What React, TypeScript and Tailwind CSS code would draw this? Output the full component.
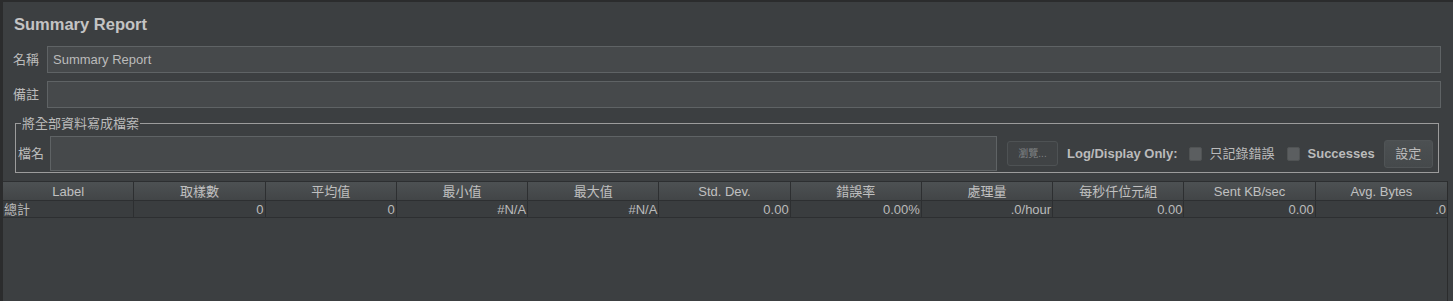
import React from "react";

const font = "font-['Liberation_Sans','Noto_Sans_CJK_TC',sans-serif]";

const columns = ["Label", "取樣數", "平均值", "最小值", "最大值", "Std. Dev.", "錯誤率", "處理量", "每秒仟位元組", "Sent KB/sec", "Avg. Bytes"];
const totals = ["總計", "0", "0", "#N/A", "#N/A", "0.00", "0.00%", ".0/hour", "0.00", "0.00", ".0"];

const Field = ({ label, value }: { label: string; value?: string }) => (
    <div className="flex items-center">
        <div className="w-[34px] text-[13px] text-[#bbbbbb]">{label}</div>
        <div className="flex h-[27px] flex-1 items-center border border-[#5f6365] bg-[#46494b] px-[5px] text-[13px] text-[#bbbbbb]">{value}</div>
    </div>
);

const CheckBox = () => <div className="h-[14px] w-[13px] rounded-[2px] border border-[#505354] bg-[#5b5e60]" />;

export default function App() {
    return (
        <div className={`${font} flex h-[301px] w-[1453px] flex-col overflow-hidden border-t-2 border-l-[3px] border-[#2b2c2d] bg-[#3c3f41] text-[#bbbbbb]`}>
            <div className="pr-[12px] pl-[10px]">
                <div className="mt-[13px] pl-[1px] text-[16.5px] leading-[19px] font-bold text-[#c4c4c4]">Summary Report</div>
                <div className="mt-[12px] flex flex-col gap-[8px]">
                    <Field label="名稱" value="Summary Report" />
                    <Field label="備註" />
                </div>
            </div>

            <fieldset className="mt-[8px] mr-[14px] ml-[12px] border border-[#9c9c9c] pr-[5px] pb-[1px] pl-[2px]">
                <legend className="ml-[3px] px-[1px] text-[13px] leading-[15px] text-[#bbbbbb]">將全部資料寫成檔案</legend>
                <div className="mt-[5px] flex items-center text-[13px]">
                    <div className="w-[32px]">檔名</div>
                    <div className="h-[35px] w-[947px] border border-[#5f6365] bg-[#46494b]" />
                    <div className="ml-[10px] flex h-[25px] w-[51px] items-center justify-center rounded-[3px] border border-[#4e5254] bg-[#404345] text-[10px] text-[#7f8284]">瀏覽...</div>
                    <div className="ml-[9px] font-bold">Log/Display Only:</div>
                    <div className="ml-[11px]"><CheckBox /></div>
                    <div className="ml-[8px]">只記錄錯誤</div>
                    <div className="ml-[12px]"><CheckBox /></div>
                    <div className="ml-[8px] font-bold">Successes</div>
                    <div className="ml-[9px] flex h-[28px] w-[49px] items-center justify-center rounded-[3px] border border-[#505456] bg-gradient-to-b from-[#4c5052] to-[#45494b] text-[13px]">設定</div>
                </div>
            </fieldset>

            <div className="mt-[8px] mr-[5px] flex-1 border-r border-[#2b2c2d] text-[13px]">
                <div className="grid h-[20px] grid-cols-11 border-y border-[#2d2f31] bg-gradient-to-b from-[#4d5153] to-[#424547] text-[#c0c0c0]">
                    {columns.map((c) => (
                        <div key={c} className="flex items-center justify-center border-r border-[#2d2f31] leading-none last:border-r-0">
                            {c}
                        </div>
                    ))}
                </div>
                <div className="grid h-[17px] grid-cols-11 border-b border-[#2d2f31] bg-[#3a3d3f]">
                    {totals.map((t, i) => (
                        <div key={i} className={`flex items-center border-r border-[#2d2f31] px-[1px] leading-none last:border-r-0 ${i === 0 ? "justify-start" : "justify-end"}`}>
                            {t}
                        </div>
                    ))}
                </div>
            </div>
        </div>
    );
}
